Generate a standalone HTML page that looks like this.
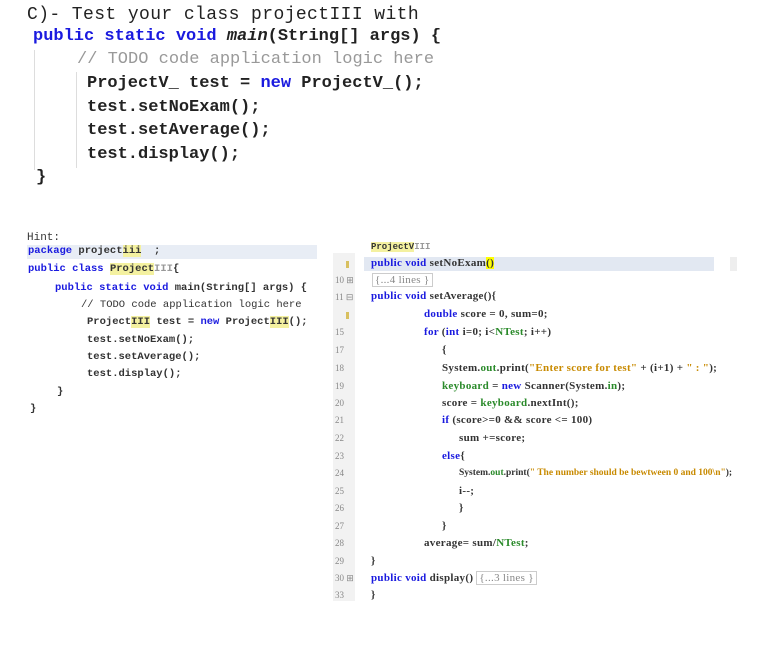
<!DOCTYPE html>
<html><head><meta charset="utf-8"><style>
body{margin:0;width:762px;height:658px;background:#fff;position:relative;overflow:hidden;font-family:"Liberation Mono",monospace;}
.a{position:absolute;white-space:pre;}
.t{font-size:17px;color:#222;}
.b{font-weight:bold;}
.k{color:#1a1adf;font-weight:bold;}
.c{color:#999;}
.s{font-size:10.5px;font-weight:bold;color:#333;}
.r{font-family:"Liberation Serif",serif;font-size:11px;color:#333;font-weight:bold;letter-spacing:0.3px}
.rk{color:#1a1adf}
.g{color:#2a8a2a}
.o{color:#c88a00}
.n{position:absolute;left:335px;font-family:"Liberation Serif",serif;font-size:9px;color:#888;}
.hl{background:#f4f1a0}
</style></head><body>
<div class="a t" style="left:27px;top:5px;font-size:18px;letter-spacing:0.4px">C)- Test your class projectIII with</div>
<div class="a t b" style="left:33px;top:27px"><span class="k">public static void</span> <i>main</i>(String[] args) {</div>
<div style="position:absolute;left:34px;top:50px;width:1px;height:120px;background:#ddd"></div>
<div style="position:absolute;left:76px;top:72px;width:1px;height:96px;background:#ddd"></div>
<div class="a t c" style="left:77px;top:50px">// TODO code application logic here</div>
<div class="a t b" style="left:87px;top:74px">ProjectV_ test = <span class="k">new</span> ProjectV_();</div>
<div class="a t b" style="left:87px;top:98px">test.setNoExam();</div>
<div class="a t b" style="left:87px;top:121px">test.setAverage();</div>
<div class="a t b" style="left:87px;top:145px">test.display();</div>
<div class="a t b" style="left:36px;top:168px">}</div>

<div class="a" style="left:27px;top:232px;font-size:11px;color:#333">Hint:</div>
<div style="position:absolute;left:27px;top:245px;width:290px;height:14px;background:#e8edf5"></div>
<div class="a s" style="left:28px;top:245px"><span class="k">package</span> project<span class="hl">iii</span>  ;</div>
<div class="a s" style="left:28px;top:263px"><span class="k">public class</span> <span class="hl">Project</span><span class="c">III</span>{</div>
<div class="a s" style="left:55px;top:282px"><span class="k">public static void</span> main(String[] args) {</div>
<div class="a s c" style="left:81px;top:299px;font-weight:normal">// TODO code application logic here</div>
<div class="a s" style="left:87px;top:316px">Project<span class="hl">III</span> test = <span class="k">new</span> Project<span class="hl">III</span>();</div>
<div class="a s" style="left:87px;top:334px">test.setNoExam();</div>
<div class="a s" style="left:87px;top:351px">test.setAverage();</div>
<div class="a s" style="left:87px;top:368px">test.display();</div>
<div class="a s" style="left:57px;top:386px">}</div>
<div class="a s" style="left:30px;top:403px">}</div>

<div style="position:absolute;left:333px;top:253px;width:22px;height:348px;background:#f2f2f2"></div>
<div style="position:absolute;left:364px;top:257px;width:350px;height:14px;background:#e2e8f2"></div>
<div style="position:absolute;left:730px;top:257px;width:7px;height:14px;background:#eee"></div>
<div class="a r" style="left:371px;top:242px;font-family:'Liberation Mono',monospace;font-size:9px;letter-spacing:0"><span class="hl">ProjectV</span><span class="c">III</span></div>
<div class="a r" style="left:371px;top:257px"><span class="rk">public void</span> setNoExam<span style="background:#ff0">()</span></div>
<div class="a r" style="left:372px;top:273px;color:#888;font-weight:normal;border:1px solid #ccc;padding:0 2px">{...4 lines }</div>
<div class="a r" style="left:371px;top:290px"><span class="rk">public void</span> setAverage(){</div>
<div class="a r" style="left:424px;top:308px"><span class="rk">double</span> score = 0, sum=0;</div>
<div class="a r" style="left:424px;top:326px"><span class="rk">for</span> (<span class="rk">int</span> i=0; i&lt;<span class="g">NTest</span>; i++)</div>
<div class="a r" style="left:442px;top:344px">{</div>
<div class="a r" style="left:442px;top:362px">System.<span class="g">out</span>.print(<span class="o">"Enter score for test" </span>+ (i+1) + <span class="o">" : "</span>);</div>
<div class="a r" style="left:442px;top:380px"><span class="g">keyboard</span> = <span class="rk">new</span> Scanner(System.<span class="g">in</span>);</div>
<div class="a r" style="left:442px;top:397px">score = <span class="g">keyboard</span>.nextInt();</div>
<div class="a r" style="left:442px;top:414px"><span class="rk">if</span> (score&gt;=0 &amp;&amp; score &lt;= 100)</div>
<div class="a r" style="left:459px;top:432px">sum +=score;</div>
<div class="a r" style="left:442px;top:450px"><span class="rk">else</span>{</div>
<div class="a r" style="left:459px;top:468px;font-size:9.5px;letter-spacing:0">System.<span class="g">out</span>.print(<span class="o">" The number should be bewtween 0 and 100\n"</span>);</div>
<div class="a r" style="left:459px;top:485px">i--;</div>
<div class="a r" style="left:459px;top:502px">}</div>
<div class="a r" style="left:442px;top:520px">}</div>
<div class="a r" style="left:424px;top:537px">average= sum/<span class="g">NTest</span>;</div>
<div class="a r" style="left:371px;top:555px">}</div>
<div class="a r" style="left:371px;top:572px"><span class="rk">public void</span> display() <span style="color:#888;font-weight:normal;border:1px solid #ccc;padding:0 2px">{...3 lines }</span></div>
<div class="a r" style="left:371px;top:589px">}</div>
<div class="n" style="top:275px">10 ⊞</div><div class="n" style="top:292px">11 ⊟</div>
<div class="n" style="top:327px">15</div><div class="n" style="top:345px">17</div><div class="n" style="top:363px">18</div><div class="n" style="top:381px">19</div><div class="n" style="top:398px">20</div><div class="n" style="top:415px">21</div><div class="n" style="top:433px">22</div><div class="n" style="top:451px">23</div><div class="n" style="top:468px">24</div><div class="n" style="top:486px">25</div><div class="n" style="top:503px">26</div><div class="n" style="top:521px">27</div><div class="n" style="top:538px">28</div><div class="n" style="top:556px">29</div><div class="n" style="top:573px">30 ⊞</div><div class="n" style="top:590px">33</div>
<div style="position:absolute;left:346px;top:261px;width:3px;height:7px;background:#d8c060"></div>
<div style="position:absolute;left:346px;top:312px;width:3px;height:7px;background:#d8c060"></div>
</body></html>
